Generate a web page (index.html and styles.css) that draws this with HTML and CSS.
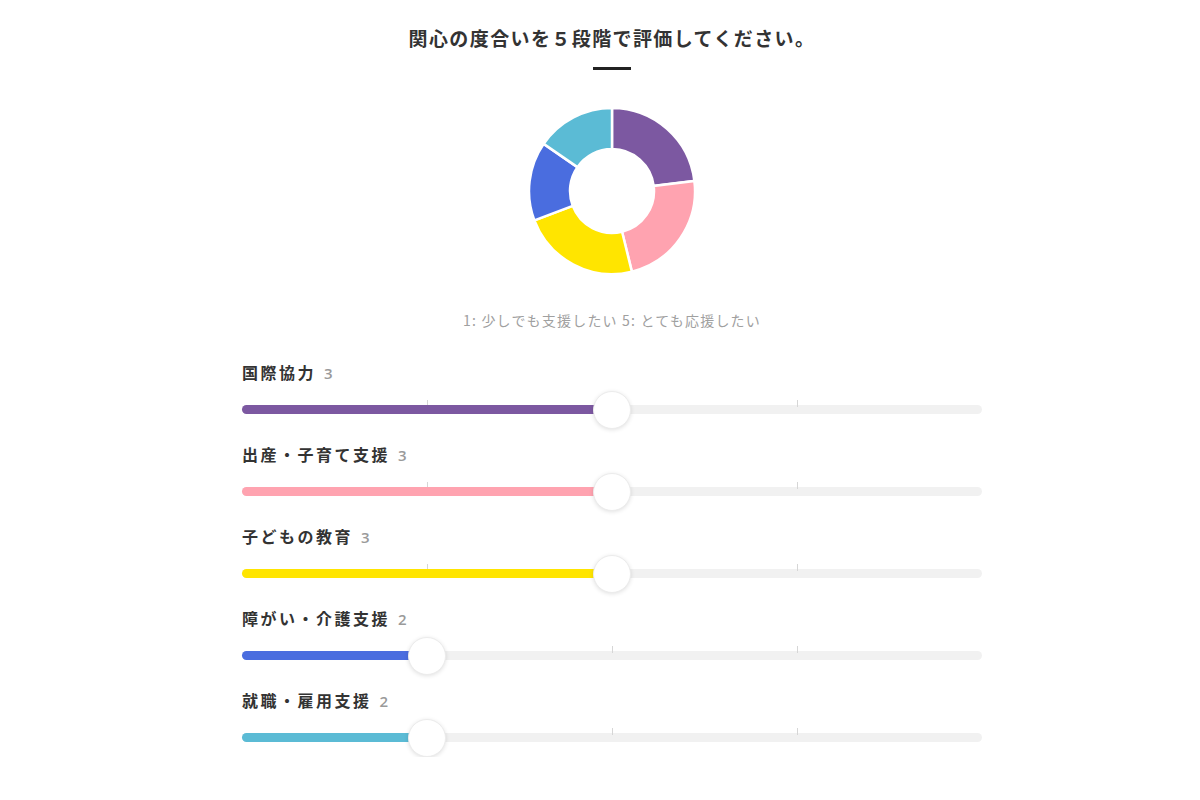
FILE: index.html
```html
<!DOCTYPE html>
<html lang="ja">
<head>
  <meta charset="utf-8">
  <title>関心の度合い</title>
  <link rel="stylesheet" href="styles.css">
</head>
<body>
  <div class="survey">
    <h2 class="survey-title">関心の度合いを５段階で評価してください。</h2>
    <div class="survey-bar"></div>

    <svg class="donut" id="donut" width="170" height="170" viewBox="0 0 170 170"></svg>

    <p class="survey-note">1: 少しでも支援したい 5: とても応援したい</p>

    <div class="rating-list" id="rating-list"></div>
  </div>

  <script>
    const items = [
      { label: "国際協力", value: 3, color: "#7c58a1" },
      { label: "出産・子育て支援", value: 3, color: "#ffa3b0" },
      { label: "子どもの教育", value: 3, color: "#ffe500" },
      { label: "障がい・介護支援", value: 2, color: "#4a6ddf" },
      { label: "就職・雇用支援", value: 2, color: "#5bbbd5" }
    ];

    const list = document.getElementById("rating-list");

    items.forEach(item => {
      const pct = (item.value - 1) / 4 * 100;
      const row = document.createElement("div");
      row.classList.add("rating");
      row.innerHTML = `
        <div class="rating-label">${item.label}<span class="rating-value">${item.value}</span></div>
        <div class="slider">
          <div class="slider-track"></div>
          <div class="slider-tick" style="left: 25%"></div>
          <div class="slider-tick" style="left: 50%"></div>
          <div class="slider-tick" style="left: 75%"></div>
          <div class="slider-fill" style="width: ${pct}%; background-color: ${item.color}"></div>
          <div class="slider-thumb" style="left: ${pct}%"></div>
        </div>`;
      list.appendChild(row);
    });

    // donut chart
    const donut = document.getElementById("donut");
    const total = items.reduce((sum, item) => sum + item.value, 0);
    const cx = 85, cy = 85, outer = 83, inner = 42;
    let angle = -Math.PI / 2;

    function point(r, a) {
      return (cx + r * Math.cos(a)).toFixed(2) + " " + (cy + r * Math.sin(a)).toFixed(2);
    }

    items.forEach(item => {
      const step = item.value / total * Math.PI * 2;
      const end = angle + step;
      const large = step > Math.PI ? 1 : 0;
      const d = `M ${point(outer, angle)} A ${outer} ${outer} 0 ${large} 1 ${point(outer, end)} ` +
                `L ${point(inner, end)} A ${inner} ${inner} 0 ${large} 0 ${point(inner, angle)} Z`;
      const path = document.createElementNS("http://www.w3.org/2000/svg", "path");
      path.setAttribute("d", d);
      path.setAttribute("fill", item.color);
      path.setAttribute("stroke", "#ffffff");
      path.setAttribute("stroke-width", "2.5");
      donut.appendChild(path);
      angle = end;
    });
  </script>
</body>
</html>
```

FILE: styles.css
```css
body {
  margin: 0;
  padding: 20px 0 0 24px;
  background-color: #ffffff;
  font-family: "Noto Sans CJK JP", "Noto Sans", sans-serif;
  color: #333333;
}

.survey {
  width: 740px;
  margin: 0 auto;
}

.survey-title {
  margin: 0;
  font-size: 19px;
  line-height: 36px;
  font-weight: bold;
  letter-spacing: 1.4px;
  text-align: center;
  color: #333333;
}

.survey-bar {
  width: 38px;
  height: 3px;
  margin: 11px auto 0;
  background-color: #222222;
}

.donut {
  display: block;
  margin: 36px auto 0;
}

.survey-note {
  margin: 34px 0 0;
  font-size: 14px;
  line-height: 20px;
  letter-spacing: 1.2px;
  text-align: center;
  color: #a0a0a0;
}

.rating-list {
  display: flex;
  flex-direction: column;
  gap: 13px;
  margin-top: 30px;
}

.rating-label {
  font-size: 16px;
  line-height: 24px;
  font-weight: bold;
  letter-spacing: 2.5px;
  color: #333333;
}

.rating-value {
  margin-left: 8px;
  font-family: "Open Sans", sans-serif;
  font-size: 15px;
  font-weight: 600;
  color: #9a9a9a;
}

.slider {
  position: relative;
  height: 38px;
  margin-top: 6px;
}

.slider-track {
  position: absolute;
  left: 0;
  right: 0;
  top: 14px;
  height: 9px;
  border-radius: 5px;
  background-color: #f1f1f1;
}

.slider-tick {
  position: absolute;
  top: 9px;
  width: 1px;
  height: 7px;
  background-color: #d6d6d6;
}

.slider-fill {
  position: absolute;
  left: 0;
  top: 14px;
  height: 9px;
  border-radius: 5px 0 0 5px;
}

.slider-thumb {
  position: absolute;
  top: 0;
  width: 38px;
  height: 38px;
  margin-left: -19px;
  box-sizing: border-box;
  border: 1px solid #ececec;
  border-radius: 50%;
  background-color: #ffffff;
  box-shadow: 0 1px 4px rgba(0, 0, 0, 0.12);
}
```
